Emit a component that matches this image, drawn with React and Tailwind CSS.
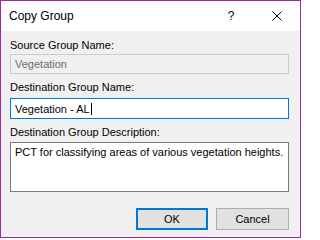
import React from "react";

const font = { fontFamily: '"Liberation Sans", Arial, sans-serif' };

export default function App() {
  return (
    <div
      className="w-[301px] h-[238px] border border-[#a3259f] bg-[#f0f0f0] flex flex-col text-[11px] leading-[16px] text-black"
      style={font}
    >
      {/* title bar */}
      <div className="h-[30px] bg-white flex items-center shrink-0">
        <span className="pl-[8px] text-[12px]">Copy Group</span>
        <span className="ml-auto w-[46px] flex justify-center text-[12px]">?</span>
        <span className="w-[46px] flex justify-center">
          <svg width="10" height="10" viewBox="0 0 10 10">
            <path d="M0.5 0.5 L9.5 9.5 M9.5 0.5 L0.5 9.5" stroke="#000" strokeWidth="1" />
          </svg>
        </span>
      </div>

      {/* body */}
      <div className="flex flex-col pl-[9px] pr-[11px] pt-[6px]">
        <label className="h-[16px]">Source Group Name:</label>
        <div className="mt-[1px] h-[20px] border border-[#cccccc] bg-[#f0f0f0] pl-[4px] flex items-center text-[#6d6d6d]">
          Vegetation
        </div>

        <label className="mt-[5px] h-[16px]">Destination Group Name:</label>
        <div className="mt-[3px] h-[21px] border border-[#0078d7] bg-white pl-[4px] flex items-center">
          <span>Vegetation - AL</span>
          <span className="w-[1px] h-[12px] bg-black ml-[1px]"></span>
        </div>

        <label className="mt-[5px] h-[16px]">Destination Group Description:</label>
        <div className="mt-[2px] h-[50px] border border-[#7a7a7a] bg-white pl-[4px] pt-[1px] whitespace-nowrap overflow-hidden">
          PCT for classifying areas of various vegetation heights.
        </div>

        <div className="mt-[16px] flex gap-[8px] pl-[126px]">
          <button className="w-[73px] h-[22px] border-2 border-[#0078d7] bg-[#e1e1e1] flex items-center justify-center">
            OK
          </button>
          <button className="w-[74px] h-[22px] border border-[#adadad] bg-[#e1e1e1] flex items-center justify-center">
            Cancel
          </button>
        </div>
      </div>
    </div>
  );
}
